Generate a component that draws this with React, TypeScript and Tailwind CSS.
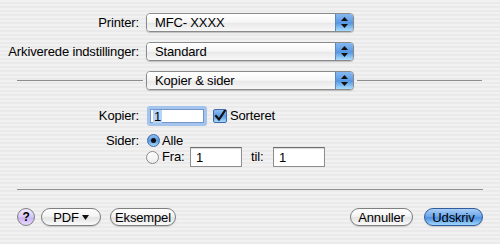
import React from "react";

function Arrows() {
  return (
    <div className="flex w-[18px] flex-col items-center justify-center gap-[3px] border-l border-[#5a86c2] bg-[linear-gradient(#86b8f0,#5f9ce4_48%,#5394df_52%,#a9dcfd)]">
      <svg width="7" height="4" viewBox="0 0 7 4">
        <path d="M3.5 0 L7 4 L0 4 Z" fill="#111" />
      </svg>
      <svg width="7" height="4" viewBox="0 0 7 4">
        <path d="M0 0 L7 0 L3.5 4 Z" fill="#111" />
      </svg>
    </div>
  );
}

function Popup({ text }: { text: string }) {
  return (
    <div className="flex h-[19px] w-[208px] overflow-hidden rounded-[4px] border border-[#8a8a8a] shadow-[0_1px_1px_rgba(0,0,0,0.2)]">
      <div className="flex flex-1 items-center bg-[linear-gradient(#ffffff,#f6f6f6_48%,#e9e9e9_55%,#f7f7f7)] pl-[8px] text-[13px] leading-none text-black">
        {text}
      </div>
      <Arrows />
    </div>
  );
}

function Field({ value, w }: { value: string; w: string }) {
  return (
    <div
      className={`flex h-[20px] items-center border border-[#8e8e8e] border-t-[#6e6e6e] bg-white pl-[5px] text-[13px] leading-none shadow-[inset_0_1px_1px_rgba(0,0,0,0.15)] ${w}`}
    >
      {value}
    </div>
  );
}

function Pill({
  label,
  w,
  blue,
}: {
  label: React.ReactNode;
  w: string;
  blue?: boolean;
}) {
  return (
    <div
      className={`flex h-[18px] items-center justify-center rounded-full border text-[13px] leading-none text-black shadow-[0_1px_1px_rgba(0,0,0,0.15)] ${w} ${
        blue
          ? "border-[#2f5d9e] bg-[linear-gradient(#a8cdf6,#6ea7ea_45%,#4f8fe0_55%,#9fd7fd)]"
          : "border-[#7f7f7f] bg-[linear-gradient(#ffffff,#f4f4f4_45%,#e3e3e3_55%,#fbfbfb)]"
      }`}
    >
      {label}
    </div>
  );
}

function Radio({ on }: { on?: boolean }) {
  return on ? (
    <div className="flex h-[13px] w-[13px] items-center justify-center rounded-full border border-[#3d6aa8] bg-[linear-gradient(#8fbff2,#5a98e2_50%,#a6dafc)]">
      <div className="h-[5px] w-[5px] rounded-full bg-[#111]" />
    </div>
  ) : (
    <div className="h-[13px] w-[13px] rounded-full border border-[#8a8a8a] bg-[linear-gradient(#ffffff,#ececec)]" />
  );
}

export default function App() {
  return (
    <div className="flex h-[244px] w-[500px] flex-col bg-[repeating-linear-gradient(180deg,#f1f1f1_0px,#f1f1f1_2px,#eaeaea_2px,#eaeaea_4px)] pt-[13px] font-['Liberation_Sans',Arial,sans-serif] text-[13px] tracking-[-0.15px] text-black">
      <div className="flex items-center">
        <div className="w-[139px] text-right">Printer:</div>
        <div className="ml-[7px]">
          <Popup text="MFC- XXXX" />
        </div>
      </div>
      <div className="mt-[9px] flex items-center">
        <div className="w-[139px] text-right">Arkiverede indstillinger:</div>
        <div className="ml-[7px]">
          <Popup text="Standard" />
        </div>
      </div>
      <div className="mt-[10px] flex items-center">
        <div className="ml-[17px] h-px w-[126px] bg-[#8c8c8c]" />
        <div className="ml-[3px]">
          <Popup text="Kopier & sider" />
        </div>
        <div className="ml-[3px] h-px w-[125px] bg-[#8c8c8c]" />
      </div>

      <div className="mt-[16px] flex h-[20px] items-center">
        <div className="w-[139px] text-right">Kopier:</div>
        <div className="ml-[8px] h-[20px] w-[60px] rounded-[3px] bg-[#a3c4ec] p-[3px]">
          <div className="flex h-full items-center border border-[#7596c6] bg-white pl-[2px] leading-none">
            <span className="bg-[#b6d4f8] px-[1px]">1</span>
          </div>
        </div>
        <div className="ml-[6px] flex h-[14px] w-[14px] items-center justify-center rounded-[2px] border border-[#3d6aa8] bg-[linear-gradient(#8fbff2,#5a98e2_50%,#a6dafc)]">
          <svg width="12" height="12" viewBox="0 0 12 12">
            <path
              d="M2 6 L5 9.5 L11 0.5"
              fill="none"
              stroke="#111"
              strokeWidth="2.2"
              strokeLinecap="round"
            />
          </svg>
        </div>
        <div className="ml-[3px]">Sorteret</div>
      </div>

      <div className="mt-[8px] flex h-[13px] items-center">
        <div className="w-[139px] text-right">Sider:</div>
        <div className="ml-[8px]">
          <Radio on />
        </div>
        <div className="ml-[2px]">Alle</div>
      </div>
      <div className="flex h-[20px] items-center">
        <div className="ml-[146px]">
          <Radio />
        </div>
        <div className="ml-[3px] w-[28px]">Fra:</div>
        <Field value="1" w="w-[52px]" />
        <div className="ml-[9px] w-[22px]">til:</div>
        <Field value="1" w="w-[52px]" />
      </div>

      <div className="mx-[17px] mt-[22px] h-px bg-[#8e8e8e]" />

      <div className="mt-[18px] flex items-center px-[17px]">
        <div className="flex h-[18px] w-[18px] items-center justify-center rounded-full border border-[#7f7f7f] bg-[linear-gradient(#f3eaff,#d7c6f7_50%,#c9b3f2_55%,#e6dafd)] text-[12px] font-bold leading-none">
          ?
        </div>
        <div className="ml-[6px]">
          <Pill
            w="w-[60px]"
            label={
              <span className="flex items-center gap-[3px]">
                PDF
                <svg width="7" height="5" viewBox="0 0 7 5">
                  <path d="M0 0 L7 0 L3.5 5 Z" fill="#111" />
                </svg>
              </span>
            }
          />
        </div>
        <div className="ml-[9px]">
          <Pill w="w-[66px]" label="Eksempel" />
        </div>
        <div className="ml-auto">
          <Pill w="w-[63px]" label="Annuller" />
        </div>
        <div className="ml-[11px]">
          <Pill w="w-[59px]" label="Udskriv" blue />
        </div>
      </div>
    </div>
  );
}
